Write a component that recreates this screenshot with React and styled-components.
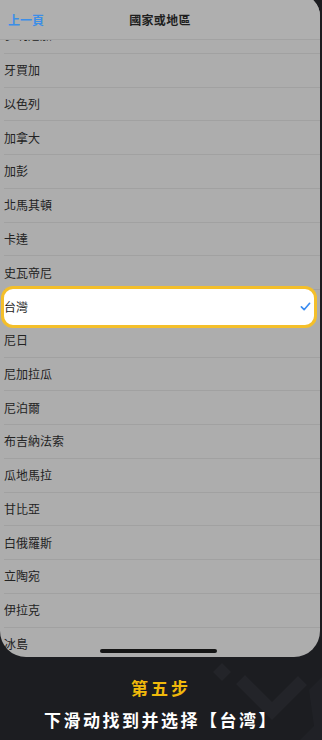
import React from 'react'
import styled, { createGlobalStyle } from 'styled-components'

const GlobalStyle = createGlobalStyle`
  html, body {
    margin: 0;
    padding: 0;
    background: #1c1d21;
  }
  body {
    font-family: "Noto Sans CJK TC", "Noto Sans CJK SC", sans-serif;
  }
`

const Page = styled.div`
  position: relative;
  width: 322px;
  height: 740px;
  overflow: hidden;
  background: #1c1d21;
  display: flex;
  flex-direction: column;
`

const Panel = styled.div`
  position: relative;
  z-index: 1;
  width: 320px;
  height: 663px;
  margin-top: -6px;
  background: #adadad;
  border-radius: 0 22px 26px 26px;
  overflow: hidden;
  display: flex;
  flex-direction: column;
`

const Header = styled.div`
  height: 46px;
  padding-top: 6px;
  box-sizing: border-box;
  background: #afafaf;
  border-bottom: 1px solid #a2a2a2;
  display: grid;
  grid-template-columns: 80px 1fr 80px;
  align-items: center;
  position: relative;
  z-index: 2;
`

const Back = styled.span`
  padding-left: 8px;
  font-size: 12px;
  font-weight: 700;
  color: #3b8ee8;
`

const Title = styled.span`
  text-align: center;
  font-size: 12px;
  font-weight: 700;
  color: #1e1e1e;
  letter-spacing: 0.3px;
`

const List = styled.div`
  flex: 1;
  overflow: hidden;
`

const Inner = styled.div`
  margin-top: -20px;
  display: flex;
  flex-direction: column;
`

const Row = styled.div`
  position: relative;
  box-sizing: border-box;
  height: ${p => (p.$selected ? '41.75px' : '33.75px')};
  margin: ${p => (p.$selected ? '-4px 3px -4px 1px' : '0 0 0 4px')};
  display: flex;
  align-items: ${p => (p.$partial ? 'flex-end' : 'center')};
  justify-content: space-between;
  font-size: 12px;
  line-height: 16px;
  color: #232323;
  border-bottom: 1px solid #a1a1a1;
  ${p => p.$partial && `
    padding-bottom: 10px;
  `}
  ${p => p.$selected && `
    z-index: 1;
    background: #ffffff;
    border: 3px solid #f4bf2a;
    border-radius: 12px;
    padding-right: 3px;
  `}
`

const Check = styled.svg`
  width: 11px;
  height: 11px;
`

const HomeBar = styled.div`
  position: absolute;
  left: 100px;
  bottom: 4px;
  width: 117px;
  height: 4px;
  border-radius: 2px;
  background: #151515;
  z-index: 3;
`

const Caption = styled.div`
  position: relative;
  z-index: 1;
  flex: 1;
  display: flex;
  flex-direction: column;
  align-items: center;
  padding-top: 20px;
  gap: 10px;
`

const Step = styled.div`
  font-size: 17px;
  font-weight: 700;
  color: #f0b90b;
  letter-spacing: 3px;
  line-height: 22px;
`

const Instruction = styled.div`
  font-size: 17px;
  font-weight: 700;
  color: #ffffff;
  letter-spacing: 2.5px;
  line-height: 22px;
`

const Watermark = styled.svg`
  position: absolute;
  left: 160px;
  top: 640px;
  width: 162px;
  height: 100px;
  z-index: 0;
`

const countries = [
  '多明尼加', '牙買加', '以色列', '加拿大', '加彭', '北馬其頓', '卡達', '史瓦帝尼',
  '台灣', '尼日', '尼加拉瓜', '尼泊爾', '布吉納法索', '瓜地馬拉', '甘比亞',
  '白俄羅斯', '立陶宛', '伊拉克', '冰島', '吉布地'
]

const App = () => {
  return (
    <Page>
      <GlobalStyle />
      <Watermark viewBox="160 640 162 100">
        <g fill="#232429">
          <path d="M222 663 L231 672 L222 681 L213 672 Z" />
          <path d="M236 684 L245 675 L272 702 L298 676 L307 685 L272 720 Z" />
          <path d="M309 690 L322 677 L322 740 L300 740 L314 726 Z" opacity="0.6" />
        </g>
      </Watermark>
      <Panel>
        <Header>
          <Back>上一頁</Back>
          <Title>國家或地區</Title>
          <span />
        </Header>
        <List>
          <Inner>
            {countries.map((c, i) => (
              <Row key={c} $selected={c === '台灣'} $partial={i === 0}>
                <span>{c}</span>
                {c === '台灣' && (
                  <Check viewBox="0 0 12 12">
                    <path d="M1.5 6.5 L4.5 9.5 L10.5 2.5" fill="none" stroke="#3a8cf0" strokeWidth="1.8" strokeLinecap="round" strokeLinejoin="round" />
                  </Check>
                )}
              </Row>
            ))}
          </Inner>
        </List>
        <HomeBar />
      </Panel>
      <Caption>
        <Step>第五步</Step>
        <Instruction>下滑动找到并选择【台湾】</Instruction>
      </Caption>
    </Page>
  )
}

export default App
